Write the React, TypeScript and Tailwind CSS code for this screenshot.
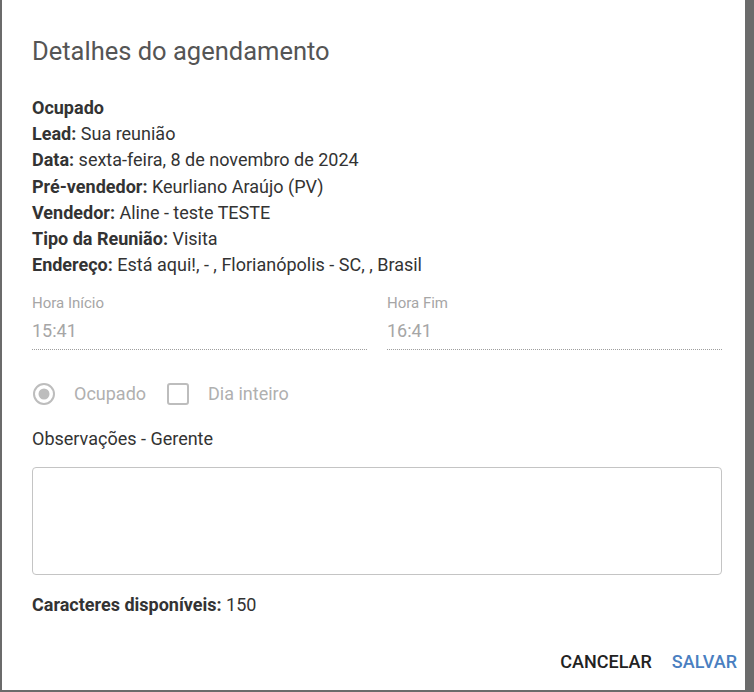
import React from 'react';

const infoRows = [
  { label: 'Lead:', value: 'Sua reunião' },
  { label: 'Data:', value: 'sexta-feira, 8 de novembro de 2024' },
  { label: 'Pré-vendedor:', value: 'Keurliano Araújo (PV)' },
  { label: 'Vendedor:', value: 'Aline - teste TESTE' },
  { label: 'Tipo da Reunião:', value: 'Visita' },
  { label: 'Endereço:', value: 'Está aqui!, - , Florianópolis - SC, , Brasil' },
];

function TimeField({ label, value }: { label: string; value: string }) {
  return (
    <div className="flex-1">
      <div className="text-[15px] leading-[16px] text-[#a6a6a6]">{label}</div>
      <div className="mt-[10px] pb-[8px] text-[18px] leading-[20px] text-[#a6a6a6] border-b border-dotted border-[#9e9e9e]">
        {value}
      </div>
    </div>
  );
}

export default function App() {
  return (
    <div
      className="w-[754px] h-[692px] bg-[#6b6b6b] overflow-hidden"
      style={{ fontFamily: 'Roboto, "Liberation Sans", sans-serif' }}
    >
      <div className="ml-[2px] w-[743px] h-[690px] bg-white flex flex-col">
        <div className="pl-[30px] pr-[23px] pt-[35px]">
          <h2 className="text-[25.5px] leading-[32px] text-[#555555] font-normal">Detalhes do agendamento</h2>

          <div className="mt-[28px] text-[18px] leading-[26.2px] text-[#333333]">
            <div className="font-bold">Ocupado</div>
            {infoRows.map((row) => (
              <div key={row.label}>
                <span className="font-bold">{row.label}</span> {row.value}
              </div>
            ))}
          </div>

          <div className="mt-[17px] flex gap-[20px]">
            <TimeField label="Hora Início" value="15:41" />
            <TimeField label="Hora Fim" value="16:41" />
          </div>

          <div className="mt-[32px] flex items-center text-[18px] leading-[24px] text-[#b0b0b0]">
            <svg width="24" height="24" viewBox="0 0 24 24">
              <circle cx="12" cy="12" r="10" fill="none" stroke="#bdbdbd" strokeWidth="2" />
              <circle cx="12" cy="12" r="5.5" fill="#bdbdbd" />
            </svg>
            <span className="ml-[18px]">Ocupado</span>
            <svg width="24" height="24" viewBox="0 0 24 24" className="ml-[20px]">
              <rect x="2" y="2" width="20" height="20" rx="2" fill="none" stroke="#bdbdbd" strokeWidth="2" />
            </svg>
            <span className="ml-[18px]">Dia inteiro</span>
          </div>

          <div className="mt-[23px] text-[18px] leading-[20px] text-[#333333]">Observações - Gerente</div>

          <textarea
            className="mt-[18px] block w-full h-[108px] rounded-[4px] border border-[#c4c4c4] resize-none outline-none"
          />

          <div className="mt-[20px] text-[18px] leading-[20px] text-[#333333]">
            <span className="font-bold">Caracteres disponíveis:</span> 150
          </div>
        </div>

        <div className="mt-auto mb-[18px] flex justify-end gap-[20px] pr-[8px] text-[18px] leading-[20px] font-medium">
          <button className="text-[#222222]">CANCELAR</button>
          <button className="text-[#4a7fc1]">SALVAR</button>
        </div>
      </div>
    </div>
  );
}
